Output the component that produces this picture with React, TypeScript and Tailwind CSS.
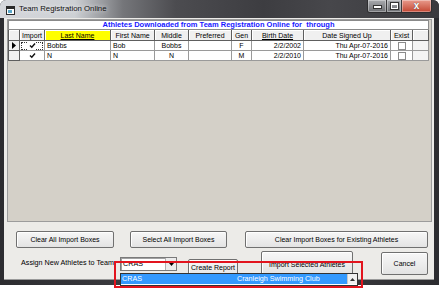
import React from 'react';

const cols = [
  { key: 'rh', w: 'w-[12px]', label: '' },
  { key: 'imp', w: 'w-[25px]', label: 'Import' },
  { key: 'last', w: 'w-[66px]', label: 'Last Name' },
  { key: 'first', w: 'w-[44px]', label: 'First Name' },
  { key: 'mid', w: 'w-[34px]', label: 'Middle' },
  { key: 'pref', w: 'w-[43px]', label: 'Preferred' },
  { key: 'gen', w: 'w-[20px]', label: 'Gen' },
  { key: 'birth', w: 'w-[52px]', label: 'Birth Date' },
  { key: 'signed', w: 'w-[87px]', label: 'Date Signed Up' },
  { key: 'exist', w: 'w-[22px]', label: 'Exist' },
  { key: 'blank', w: 'w-[16px]', label: '' },
];

const athletes = [
  { last: 'Bobbs', first: 'Bob', mid: 'Bobbs', gen: 'F', birth: '2/2/2002', signed: 'Thu Apr-07-2016', current: true },
  { last: 'N', first: 'N', mid: 'N', gen: 'M', birth: '2/2/2010', signed: 'Thu Apr-07-2016', current: false },
];

function CheckBox({ checked }: { checked?: boolean }) {
  return (
    <div className={`w-[8px] h-[8px] flex items-center justify-center ${checked ? 'bg-white' : 'bg-white border border-[#8c8c8c]'}`}>
      {checked && (
        <svg width="7" height="7" viewBox="0 0 7 7">
          <polyline points="1,3.5 2.8,5.3 6,1.5" fill="none" stroke="#111" strokeWidth="1.4" />
        </svg>
      )}
    </div>
  );
}

function Button({ label, className, top }: { label: string; className: string; top?: boolean }) {
  return (
    <div
      className={`flex justify-center border border-[#707070] rounded-[2px] bg-gradient-to-b from-[#f7f7f7] to-[#e3e3e3] shadow-[inset_1px_1px_0_#ffffff] text-[7px] leading-none ${
        top ? 'items-start' : 'items-center'
      } ${className}`}
    >
      {label}
    </div>
  );
}

function TitleBar() {
  return (
    <div className="h-[20px] flex items-start rounded-t-[6px] bg-[linear-gradient(to_right,#d5d7db_0%,#cdd0d4_17%,#75767a_28%,#4c4c50_40%,#3d3d41_60%,#47474b_75%,#3a3a3e_100%)]">
      <div className="ml-[6px] mt-[6px]">
        <svg width="9" height="9" viewBox="0 0 9 9">
          <rect x="0.5" y="0.5" width="8" height="8" fill="#ffffff" stroke="#2a2a2a" />
          <rect x="1" y="1" width="7" height="2" fill="#2a2a2a" />
          <rect x="2" y="4" width="4" height="3" fill="#5aa7c8" />
        </svg>
      </div>
      <div className="ml-[4px] mt-[5px] text-[7.8px] leading-none text-[#111] [text-shadow:0_0_5px_#ffffff]">
        Team Registration Online
      </div>
      <div className="ml-auto mr-[7px] flex h-[13px] rounded-b-[3px] border border-t-0 border-[#2e2e30] overflow-hidden">
        <div className="w-[19px] h-full flex items-end justify-center pb-[3px] bg-gradient-to-b from-[#a9abaf] to-[#6d6f73] border-r border-[#3a3a3c] shadow-[inset_0_0_0_1px_rgba(255,255,255,0.35)]">
          <div className="w-[7px] h-[2px] bg-white border border-[#333] box-content" />
        </div>
        <div className="w-[15px] h-full flex items-center justify-center bg-gradient-to-b from-[#a9abaf] to-[#6d6f73] border-r border-[#3a3a3c] shadow-[inset_0_0_0_1px_rgba(255,255,255,0.35)]">
          <div className="w-[7px] h-[6px] border-[1.5px] border-white border-t-[2px] outline outline-1 outline-[#333]" />
        </div>
        <div className="w-[29px] h-full flex items-center justify-center bg-gradient-to-b from-[#e89a8c] to-[#c24430] shadow-[inset_0_0_0_1px_rgba(255,255,255,0.35)]">
          <span className="text-[10px] font-bold leading-none text-white [text-shadow:0_0_1px_#333]">x</span>
        </div>
      </div>
    </div>
  );
}

function Grid() {
  return (
    <div className="w-[421px] flex flex-col text-[7px] leading-none">
      <div className="h-[10px] bg-white border border-[#8a8a8a] flex items-center justify-center">
        <span className="font-bold text-[7.5px] text-[#1818ff] whitespace-pre">
          Athletes Downloaded from Team Registration Online for  through
        </span>
      </div>
      <div className="h-[11px] flex">
        {cols.map((c) => (
          <div
            key={c.key}
            className={`${c.w} h-full flex items-center justify-center border-r border-b border-[#5e5e5e] shadow-[inset_1px_1px_0_#ffffff] ${
              c.key === 'last' ? 'bg-[#ffff00]' : 'bg-[#f0f0f0]'
            } ${c.key === 'rh' ? 'border-l' : ''}`}
          >
            <span className={c.key === 'last' || c.key === 'birth' ? 'underline' : ''}>{c.label}</span>
          </div>
        ))}
      </div>
      {athletes.map((a, i) => (
        <div key={i} className="h-[10px] flex">
          <div className="w-[12px] h-full flex items-center justify-center bg-[#f0f0f0] border-l border-r border-b border-[#5e5e5e]">
            {a.current && (
              <svg width="4" height="7" viewBox="0 0 4 7">
                <polygon points="0,0 4,3.5 0,7" fill="#000" />
              </svg>
            )}
          </div>
          <div className="w-[25px] h-full flex items-center justify-center bg-white border-r border-b border-[#9a9a9a]">
            <div className={a.current ? 'border border-dotted border-[#333] w-[22px] h-[8px] flex items-center justify-center' : ''}>
              <CheckBox checked />
            </div>
          </div>
          <div className="w-[66px] h-full flex items-center pl-[2px] bg-white border-r border-b border-[#9a9a9a]">{a.last}</div>
          <div className="w-[44px] h-full flex items-center pl-[2px] bg-white border-r border-b border-[#9a9a9a]">{a.first}</div>
          <div className="w-[34px] h-full flex items-center justify-center bg-white border-r border-b border-[#9a9a9a]">{a.mid}</div>
          <div className="w-[43px] h-full bg-white border-r border-b border-[#9a9a9a]" />
          <div className="w-[20px] h-full flex items-center justify-center bg-white border-r border-b border-[#9a9a9a]">{a.gen}</div>
          <div className="w-[52px] h-full flex items-center justify-end pr-[2px] bg-white border-r border-b border-[#9a9a9a]">{a.birth}</div>
          <div className="w-[87px] h-full flex items-center justify-end pr-[2px] bg-white border-r border-b border-[#9a9a9a]">{a.signed}</div>
          <div className="w-[22px] h-full flex items-center justify-center bg-white border-r border-b border-[#9a9a9a]">
            <CheckBox />
          </div>
          <div className="w-[16px] h-full bg-[#f4f4f4] border-r border-b border-[#9a9a9a]" />
        </div>
      ))}
    </div>
  );
}

export default function App() {
  return (
    <div className="w-[439px] h-[293px] bg-white relative overflow-hidden font-['Liberation_Sans',Arial,sans-serif] text-black">
      <div className="w-[439px] h-[285px] flex flex-col rounded-t-[6px] bg-gradient-to-r from-[#2c2c30] via-[#46464a] to-[#2c2c30]">
        <TitleBar />
        <div className="flex-1 flex pl-[4px] pr-[5px] pb-[5px]">
          <div className="flex-1 flex flex-col bg-[#ecebe8] border-b border-[#9a9a9a]">
            {/* athlete grid panel */}
            <div className="mt-[1px] ml-[3px] mr-[2px] h-[203px] border border-[#9c9c9c] bg-[#d4d0c8]">
              <Grid />
            </div>

            <div className="mt-[9px] pl-[12px] flex">
              <Button label="Clear All Import Boxes" className="w-[98px] h-[17px]" />
              <Button label="Select All Import Boxes" className="ml-[16px] w-[97px] h-[17px]" />
              <Button label="Clear Import Boxes for Existing Athletes" className="ml-[18px] w-[183px] h-[17px]" />
            </div>

            <div className="mt-[3px] pl-[17px] flex items-start">
              <div className="mt-[8px] w-[99px] text-[7.2px] leading-none">Assign New Athletes to Team</div>
              <div className="mt-[6px] w-[57px] h-[14px] flex bg-white border border-[#7a7a7a] shadow-[inset_1px_1px_0_#a0a0a0]">
                <div className="flex-1 flex items-center pl-[2px] text-[7.2px] leading-none">CRAS</div>
                <div className="w-[11px] h-full flex items-center justify-center bg-[#ececec] border-l border-[#b0b0b0]">
                  <svg width="5" height="3" viewBox="0 0 5 3">
                    <polygon points="0,0 5,0 2.5,3" fill="#000" />
                  </svg>
                </div>
              </div>
              <Button label="Create Report" top className="mt-[8px] ml-[11px] w-[50px] h-[20px] pt-[4px]" />
              <Button label="Import Selected Athletes" top className="ml-[23px] w-[92px] h-[24px] pt-[9px]" />
              <Button label="Cancel" className="mt-[1px] ml-[28px] w-[47px] h-[23px]" />
            </div>
          </div>
        </div>
      </div>

      {/* open dropdown list */}
      <div className="absolute left-[120px] top-[273px] w-[238px] h-[13px] bg-white border border-[#333] flex items-start text-[7.2px] leading-none">
        <div className="flex-1 h-[10px] bg-[#3399ff] text-white flex items-center">
          <span className="w-[116px] pl-[1px]">CRAS</span>
          <span>Cranleigh Swimming Club</span>
        </div>
        <div className="w-[10px] h-[10px] bg-[#f0f0f0] border-l border-[#c8c8c8] flex items-center justify-center">
          <svg width="5" height="3" viewBox="0 0 5 3">
            <polygon points="0,3 5,3 2.5,0" fill="#333" />
          </svg>
        </div>
      </div>

      {/* highlight box */}
      <div className="absolute left-[114px] top-[261px] w-[249px] h-[27px] border-2 border-[#e2141e]" />
    </div>
  );
}
